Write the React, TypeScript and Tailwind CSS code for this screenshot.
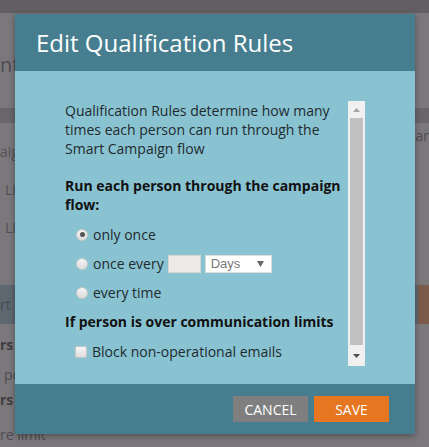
import React from 'react';

const font = { fontFamily: '"Open Sans", "Liberation Sans", sans-serif' };

function Radio({ checked }: { checked?: boolean }) {
  return (
    <span className="relative flex h-[12px] w-[12px] shrink-0 items-center justify-center rounded-full border border-[#c9c9c9] bg-gradient-to-b from-[#f4f4f4] to-[#dcdcdc]">
      {checked && <span className="h-[5px] w-[5px] rounded-full bg-[#555]" />}
    </span>
  );
}

function ScrollBar() {
  return (
    <div className="flex w-[17px] shrink-0 flex-col bg-[#f0f0f0]">
      <div className="flex h-[17px] items-center justify-center">
        <svg width="7" height="4" viewBox="0 0 7 4">
          <path d="M0 4 L3.5 0 L7 4 Z" fill="#a3a3a3" />
        </svg>
      </div>
      <div className="mx-[2px] flex-1 bg-[#c1c1c1]" />
      <div className="flex h-[21px] items-center justify-center">
        <svg width="7" height="4" viewBox="0 0 7 4">
          <path d="M0 0 L7 0 L3.5 4 Z" fill="#505050" />
        </svg>
      </div>
    </div>
  );
}

export default function App() {
  return (
    <div className="relative h-[447px] w-[429px] overflow-hidden bg-[#7b787c]" style={font}>
      {/* Page behind the dimmed overlay */}
      <div className="h-[13px] bg-[#625e64]" />
      <div className="h-[95px] pt-[40px] text-[20px] leading-[24px] text-[#4e4b51]">
        <span>nte</span>
      </div>
      <div className="h-[15px] bg-[#69666b]" />
      <div className="relative h-[162px] pt-[19px] text-[14px] leading-[19px] text-[#524f56]">
        <p>aig</p>
        <p className="mt-[19px] pl-[5px]">Li</p>
        <p className="mt-[19px] pl-[5px]">Li</p>
        <span className="absolute right-0 top-[3px] text-[#4e4b51]">nar</span>
      </div>
      <div className="flex h-[39px] items-center">
        <div className="flex h-full flex-1 items-center bg-[#5e6870] text-[14px] text-[#434a50]">
          <span>rt c</span>
        </div>
        <div className="h-full w-[11px] bg-[#7b5b49]" />
      </div>
      <div className="text-[14px] leading-[19px] text-[#4e4b51]">
        <p className="pt-[11px] font-bold text-[#3f3d42]">rs</p>
        <p className="mt-[11px] pl-[4px]">pe</p>
        <p className="mt-[6px] font-bold text-[#3f3d42]">rs</p>
        <p className="mt-[16px]">re limit</p>
      </div>

      {/* Modal */}
      <div className="absolute left-[15px] top-[14px] w-[400px] shadow-[0_2px_6px_rgba(0,0,0,0.35)]">
        <div className="flex h-[57px] items-center bg-[#467e90] pl-[21px] text-[24px] text-white">
          Edit Qualification Rules
        </div>
        <div className="flex h-[313px] bg-[#89c3d2] pb-[18px] pl-[50px] pr-[50px] pt-[30px]">
          <div className="flex-1 pr-[3px] text-[14px] leading-[19px] text-[#1f2a2e]">
            <p>Qualification Rules determine how many times each person can run through the Smart Campaign flow</p>
            <p className="mt-[18px] font-bold text-[#111]">Run each person through the campaign flow:</p>
            <div className="mt-[11px] flex flex-col gap-[10px] pl-[11px]">
              <label className="flex h-[19px] items-center gap-[5px]">
                <Radio checked />
                <span>only once</span>
              </label>
              <label className="flex h-[19px] items-center gap-[5px]">
                <Radio />
                <span>once every</span>
                <span className="ml-[-1px] h-[18px] w-[33px] border border-[#d6d6d2] bg-[#ecebe7]" />
                <span
                  className="ml-[-1px] flex h-[18px] w-[67px] items-center justify-between border border-[#dcdcdc] bg-white pl-[5px] pr-[7px] text-[13px] text-[#777]"
                  style={{ fontFamily: '"Liberation Sans", Arial, sans-serif' }}
                >
                  Days
                  <svg width="7" height="6" viewBox="0 0 7 6">
                    <path d="M0 0 L7 0 L3.5 6 Z" fill="#666" />
                  </svg>
                </span>
              </label>
              <label className="flex h-[19px] items-center gap-[5px]">
                <Radio />
                <span>every time</span>
              </label>
            </div>
            <p className="mt-[10px] font-bold text-[#111]">If person is over communication limits</p>
            <label className="mt-[11px] flex h-[19px] items-center gap-[5px] pl-[10px]">
              <span className="h-[12px] w-[12px] rounded-[2px] border border-[#c6c6c6] bg-gradient-to-b from-[#f6f6f6] to-[#dedede]" />
              <span>Block non-operational emails</span>
            </label>
          </div>
          <ScrollBar />
        </div>
        <div className="flex h-[50px] items-center justify-end gap-[6px] bg-[#467e90] pr-[26px]">
          <button className="h-[26px] w-[75px] bg-[#7f7f7f] text-[14px] text-white">CANCEL</button>
          <button className="h-[26px] w-[75px] bg-[#e6761f] text-[14px] text-white">SAVE</button>
        </div>
      </div>
    </div>
  );
}
